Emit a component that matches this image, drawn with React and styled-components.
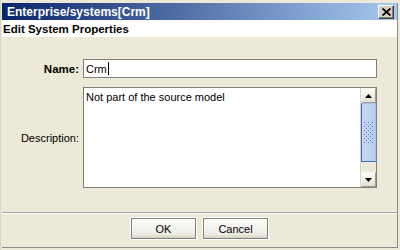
import React from "react";
import styled, { createGlobalStyle } from "styled-components";

const GlobalStyle = createGlobalStyle`
  html, body {
    margin: 0;
    padding: 0;
    background: #ece9d8;
  }
  * {
    box-sizing: border-box;
  }
`;

// grip dots on the scroll thumb
const gripDots = [];
for (let r = 0; r < 11; r++) {
  for (let c = 0; c < 5; c++) {
    if ((r + c) % 2 === 0) gripDots.push([c * 2, r * 2]);
  }
}

function App() {
  return (
    <>
      <GlobalStyle />
      <Frame>
        <Pane>
          <TitleBar>
            <Title>Enterprise/systems[Crm]</Title>
            <CloseButton aria-label="Close">
              <svg width="9" height="8" viewBox="0 0 9 8">
                <path d="M0.5 0.5 L8.5 7.5 M8.5 0.5 L0.5 7.5" stroke="#000" strokeWidth="1.8" />
              </svg>
            </CloseButton>
          </TitleBar>
          <Header>Edit System Properties</Header>
          <Form>
            <Row>
              <Label bold>Name:</Label>
              <TextInput>
                Crm<Caret />
              </TextInput>
            </Row>
            <Row>
              <Label>Description:</Label>
              <TextArea>
                <AreaText>Not part of the source model</AreaText>
                <ScrollBar>
                  <ArrowButton>
                    <svg width="7" height="4" viewBox="0 0 7 4">
                      <path d="M3.5 0 L7 4 L0 4 Z" fill="#000" />
                    </svg>
                  </ArrowButton>
                  <Thumb>
                    <svg width="9" height="21" viewBox="0 0 9 21">
                      {gripDots.map(([x, y], i) => (
                        <rect key={i} x={x} y={y} width="1" height="1" fill="#4a74d8" />
                      ))}
                    </svg>
                  </Thumb>
                  <Track />
                  <ArrowButton>
                    <svg width="7" height="4" viewBox="0 0 7 4">
                      <path d="M0 0 L7 0 L3.5 4 Z" fill="#000" />
                    </svg>
                  </ArrowButton>
                </ScrollBar>
              </TextArea>
            </Row>
          </Form>
          <Footer>
            <Button>OK</Button>
            <Button>Cancel</Button>
          </Footer>
        </Pane>
      </Frame>
    </>
  );
}

export default App;

const Frame = styled.div`
  width: 400px;
  height: 250px;
  padding: 3px 2px 2px 2px;
  background: #ece9d8;
  border-left: 1px solid #d8d5c8;
  font-family: "Liberation Sans", Arial, sans-serif;
`;

const Pane = styled.div`
  height: 100%;
  display: flex;
  flex-direction: column;
  border-right: 1px solid #8c8c8c;
  border-bottom: 1px solid #8c8c8c;
  margin-left: -1px;
`;

const TitleBar = styled.div`
  height: 17px;
  display: flex;
  align-items: center;
  justify-content: space-between;
  padding: 0 3px 0 5px;
  background: linear-gradient(to right, #0a246a, #a6caf0);
`;

const Title = styled.span`
  color: #fff;
  font-weight: bold;
  font-size: 12px;
`;

const CloseButton = styled.div`
  width: 16px;
  height: 14px;
  display: flex;
  align-items: center;
  justify-content: center;
  background: #d4d0c8;
  border: 1px solid;
  border-color: #fff #404040 #404040 #fff;
  box-shadow: inset -1px -1px 0 #808080;
`;

const Header = styled.div`
  height: 17px;
  display: flex;
  align-items: center;
  padding-left: 1px;
  background: #fff;
  font-weight: bold;
  font-size: 11.5px;
  color: #000;
`;

const Form = styled.div`
  flex: 1;
  display: flex;
  flex-direction: column;
  gap: 9px;
  padding: 22px 20px 0 0;
`;

const Row = styled.div`
  display: flex;
  align-items: center;
  gap: 4px;
`;

const Label = styled.span`
  width: 77px;
  text-align: right;
  font-size: ${(p) => (p.bold ? "11.5px" : "11px")};
  font-weight: ${(p) => (p.bold ? "bold" : "normal")};
  color: #000;
`;

const TextInput = styled.div`
  flex: 1;
  height: 19px;
  display: flex;
  align-items: center;
  padding-left: 2px;
  background: #fff;
  border: 1px solid #7f7f7f;
  font-size: 11px;
  color: #000;
`;

const Caret = styled.span`
  display: inline-block;
  width: 1px;
  height: 13px;
  margin-left: 1px;
  background: #000;
`;

const TextArea = styled.div`
  flex: 1;
  height: 101px;
  display: flex;
  background: #fff;
  border: 1px solid #7f7f7f;
`;

const AreaText = styled.div`
  flex: 1;
  padding: 3px 2px;
  font-size: 11px;
  color: #000;
`;

const ScrollBar = styled.div`
  width: 16px;
  display: flex;
  flex-direction: column;
  background: #f1efe4;
  border-left: 1px solid #d8d5c8;
`;

const ArrowButton = styled.div`
  height: 15px;
  display: flex;
  align-items: center;
  justify-content: center;
  background: linear-gradient(to bottom, #fdfcf8, #e4e1d2);
  border: 1px solid;
  border-color: #f8f7f2 #9d9b90 #9d9b90 #f8f7f2;
`;

const Thumb = styled.div`
  height: 59px;
  display: flex;
  align-items: center;
  justify-content: center;
  background: linear-gradient(to right, #c9d8f3, #b9cdef);
  border: 1px solid #3c6cd0;
  border-top-color: #a8c0ec;
  border-right-color: #a8c0ec;
`;

const Track = styled.div`
  flex: 1;
  background: #ece9d8;
`;

const Footer = styled.div`
  height: 35px;
  display: flex;
  justify-content: center;
  gap: 7px;
  padding-top: 4px;
  border-top: 1px solid #a0a0a0;
  box-shadow: inset 0 1px 0 #fff;
`;

const Button = styled.div`
  width: 65px;
  height: 21px;
  display: flex;
  align-items: center;
  justify-content: center;
  margin-top: 1px;
  background: linear-gradient(to bottom, #fdfdfb, #ecebe4 80%, #d6d2c2);
  border: 1px solid #808080;
  outline: 1px solid #fff;
  font-size: 11px;
  color: #000;
`;
